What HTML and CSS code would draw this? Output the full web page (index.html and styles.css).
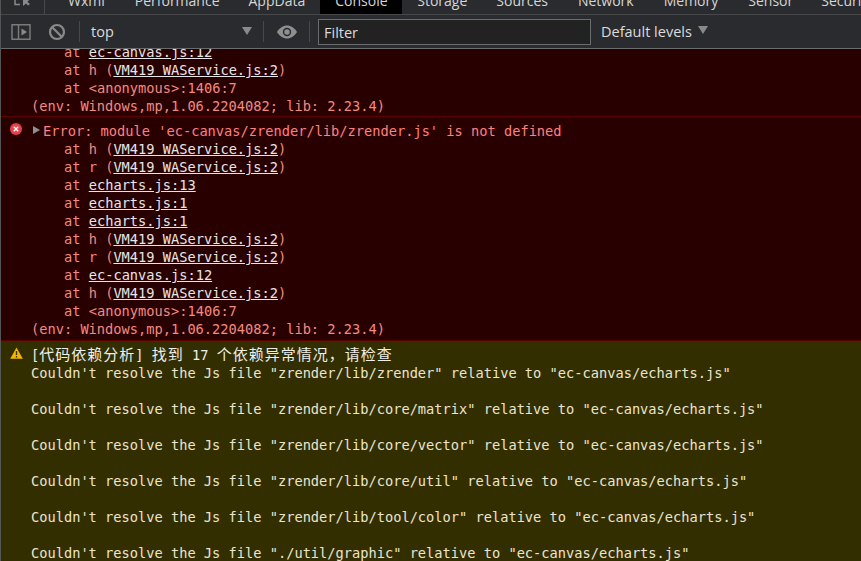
FILE: index.html
```html
<!DOCTYPE html>
<html lang="zh">
<head>
<meta charset="utf-8">
<title>Console</title>
<link rel="stylesheet" href="styles.css">
</head>
<body>
<div class="app">
  <nav class="tabs">
    <svg class="inspect" width="20" height="14" viewBox="0 0 20 14"><path d="M1 0v4.500h5" stroke="#8a8a8a" stroke-width="1.500" fill="none"/><path d="M9 0v6l3-2.500 2 2 2-1.500-2.500-2 1.500-2z" fill="#8a8a8a"/></svg>
    <span class="tab-sep"></span>
    <span class="tab t-wxml">Wxml</span>
    <span class="tab t-perf">Performance</span>
    <span class="tab t-app">AppData</span>
    <span class="tab active">Console</span>
    <span class="tab t-stor">Storage</span>
    <span class="tab t-src">Sources</span>
    <span class="tab t-net">Network</span>
    <span class="tab t-mem">Memory</span>
    <span class="tab t-sen">Sensor</span>
    <span class="tab t-sec">Security</span>
  </nav>
  <div class="toolbar">
    <svg class="ico-side" width="20" height="20" viewBox="0 0 20 20"><path d="M1 2.800h18v14.500H1zM7.500 2.800v14.500" fill="none" stroke="#7a7a7a" stroke-width="1.500"/><path d="M10.500 6.500l5.500 3.500-5.500 3.500z" fill="#8a8a8a"/></svg>
    <svg class="ico-clear" width="18" height="18" viewBox="0 0 18 18"><circle cx="9" cy="9" r="7" fill="none" stroke="#8a8a8a" stroke-width="2.200"/><path d="M4 4l10 10" stroke="#8a8a8a" stroke-width="2.200"/></svg>
    <span class="bar-sep"></span>
    <div class="context"><span>top</span><i class="tri"></i></div>
    <span class="bar-sep"></span>
    <svg class="ico-eye" width="22" height="14" viewBox="0 0 22 14"><path d="M1 7c2.500-4 6-6.500 10-6.500S18.500 3 21 7c-2.500 4-6 6.500-10 6.500S3.500 11 1 7z" fill="#8f8f8f"/><circle cx="11" cy="7" r="4.200" fill="#2a2b2e"/><circle cx="11" cy="7" r="2.700" fill="#8f8f8f"/></svg>
    <span class="bar-sep sep-last"></span>
    <div class="filter">Filter</div>
    <div class="levels"><span>Default levels</span><i class="tri"></i></div>
  </div>
  <div class="log">
    <section class="msg err first">
      <div class="at">at <a>ec-canvas.js:12</a></div>
      <div class="at">at h (<a>VM419 WAService.js:2</a>)</div>
      <div class="at">at &lt;anonymous&gt;:1406:7</div>
      <div class="env">(env: Windows,mp,1.06.2204082; lib: 2.23.4)</div>
    </section>
    <section class="msg err">
      <svg class="badge" width="12" height="12" viewBox="0 0 12 12"><circle cx="6" cy="6" r="6" fill="#e8404a"/><path d="M3.800 3.800l4.400 4.400M8.200 3.800l-4.400 4.400" stroke="#fff" stroke-width="1.400"/></svg>
      <div class="head"><i class="caret"></i>Error: module 'ec-canvas/zrender/lib/zrender.js' is not defined</div>
      <div class="at">at h (<a>VM419 WAService.js:2</a>)</div>
      <div class="at">at r (<a>VM419 WAService.js:2</a>)</div>
      <div class="at">at <a>echarts.js:13</a></div>
      <div class="at">at <a>echarts.js:1</a></div>
      <div class="at">at <a>echarts.js:1</a></div>
      <div class="at">at h (<a>VM419 WAService.js:2</a>)</div>
      <div class="at">at r (<a>VM419 WAService.js:2</a>)</div>
      <div class="at">at <a>ec-canvas.js:12</a></div>
      <div class="at">at h (<a>VM419 WAService.js:2</a>)</div>
      <div class="at">at &lt;anonymous&gt;:1406:7</div>
      <div class="env">(env: Windows,mp,1.06.2204082; lib: 2.23.4)</div>
    </section>
    <section class="msg warn">
      <svg class="badge" width="13" height="12" viewBox="0 0 13 12"><path d="M6.500 0.500L12.800 11.800H0.200z" fill="#f4b400"/><path d="M6.500 4v4M6.500 9v1.500" stroke="#3a3000" stroke-width="1.300"/></svg>
      <div class="title">[<span class="cjk">代码依赖分析</span>] <span class="cjk">找到</span> 17 <span class="cjk">个依赖异常情况，请检查</span></div>
      <div class="w">Couldn't resolve the Js file "zrender/lib/zrender" relative to "ec-canvas/echarts.js"</div>
      <div class="w gap">Couldn't resolve the Js file "zrender/lib/core/matrix" relative to "ec-canvas/echarts.js"</div>
      <div class="w gap">Couldn't resolve the Js file "zrender/lib/core/vector" relative to "ec-canvas/echarts.js"</div>
      <div class="w gap">Couldn't resolve the Js file "zrender/lib/core/util" relative to "ec-canvas/echarts.js"</div>
      <div class="w gap">Couldn't resolve the Js file "zrender/lib/tool/color" relative to "ec-canvas/echarts.js"</div>
      <div class="w gap">Couldn't resolve the Js file "./util/graphic" relative to "ec-canvas/echarts.js"</div>
    </section>
  </div>
</div>
</body>
</html>
```
FILE: styles.css
```css
* { box-sizing: border-box; }
html, body { margin: 0; padding: 0; background: #290000; }
.app { width: 861px; height: 561px; overflow: hidden; display: flex; flex-direction: column; border-left: 1px solid #555; }

.tabs { height: 15px; flex: none; display: flex; align-items: flex-end; overflow: hidden; background: #2a2b2e; border-bottom: 1px solid #47484a; font: 14px/18px "Open Sans", "Noto Sans", sans-serif; color: #d6d6d6; padding-left: 13px; }
.inspect { flex: none; }
.tab-sep { width: 1px; height: 14px; background: #47484a; margin-left: 10px; flex: none; }
.tab { flex: none; white-space: nowrap; margin-bottom: 4px; }
.t-wxml { margin-left: 23px; }
.t-perf { margin-left: 30px; }
.t-app { margin-left: 29px; }
.tab.active { background: #000; height: 14px; margin: 0 0 0 15px; width: 82px; padding: 0 15px 4px; display: flex; align-items: flex-end; }
.t-stor { margin-left: 15px; }
.t-src { margin-left: 29px; }
.t-net { margin-left: 30px; }
.t-mem { margin-left: 30px; }
.t-sen { margin-left: 30px; }
.t-sec { margin-left: 28px; }

.toolbar { height: 34px; flex: none; display: flex; align-items: center; background: #2a2b2e; border-bottom: 1px solid #6a6b6d; padding-left: 10px; font: 14.500px "Open Sans", "Noto Sans", sans-serif; color: #dcdcdc; }
.ico-side { flex: none; }
.ico-clear { flex: none; margin-left: 17px; }
.bar-sep { flex: none; width: 1px; height: 21px; background: #47484a; margin-left: 13px; }
.context { flex: none; width: 161px; margin-left: 11px; display: flex; align-items: center; justify-content: space-between; }
.context .tri { margin-top: -2px; }
.tri { flex: none; width: 0; height: 0; border-left: 5px solid transparent; border-right: 5px solid transparent; border-top: 8px solid #8a8a8a; }
.context + .bar-sep { margin-left: 11px; }
.ico-eye { flex: none; margin-left: 12px; }
.sep-last { margin-left: 11px; }
.filter { flex: none; width: 273px; height: 26px; margin-left: 8px; background: #222; border: 1px solid #6a6b6d; padding-left: 5px; line-height: 25px; }
.levels { flex: none; margin-left: 10px; display: flex; align-items: center; gap: 6px; }
.levels .tri { margin-top: -4px; }

.log { flex: 1; min-height: 0; overflow: hidden; font: 13.680px/18px "DejaVu Sans Mono", monospace; }
.msg { position: relative; padding-left: 30px; }
.msg > div { white-space: pre; }
.err { background: #290000; color: #f28b82; border-bottom: 1px solid #5c0000; }
.first { margin-top: -6px; padding-bottom: 1px; }
.err .head { padding-top: 5px; padding-left: 12px; position: relative; color: #ff8080; }
.msg.err:not(.first) { padding-bottom: 2px; }
.caret { position: absolute; left: 2px; top: 9px; width: 0; height: 0; border-top: 4.500px solid transparent; border-bottom: 4.500px solid transparent; border-left: 7px solid #8f8f8f; }
.at { padding-left: 33px; }
.at a { color: #e6e6e6; text-decoration: underline; }
.badge { position: absolute; left: 9px; top: 6px; }
.warn { background: #332e00; color: #ebe5cf; padding-top: 4px; }
.msg .title { line-height: 19px; height: 19px; color: #eeeeee; }
.cjk { font-family: "Noto Sans CJK SC", sans-serif; font-size: 15px; line-height: 18px; letter-spacing: 1px; }
.gap { margin-top: 18px; }
```
